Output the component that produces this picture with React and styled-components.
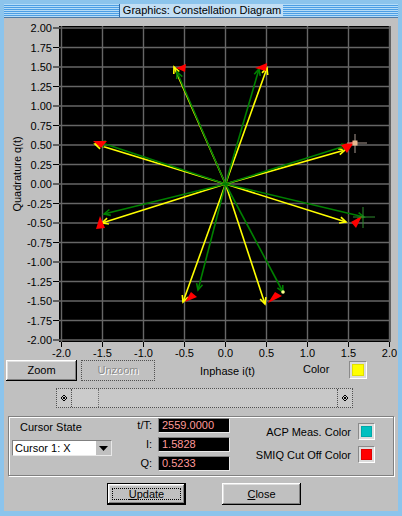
import React from 'react';
import styled, { createGlobalStyle } from 'styled-components';

const GlobalStyle = createGlobalStyle`
  html, body { margin: 0; padding: 0; background: #8cc4ec; }
  body { font-family: "Liberation Sans", Arial, sans-serif; font-size: 11px; color: #000; }
  * { box-sizing: border-box; }
`;

const Window = styled.div`
  width: 402px;
  height: 516px;
  background: #8cc4ec;
  padding: 4px 4px 5px 4px;
  display: flex;
  flex-direction: column;
`;

const TitleBar = styled.div`
  height: 14px;
  display: flex;
  border-bottom: 1px solid #4d7aa6;
`;

const Stripes = styled.div`
  flex: 1;
  background: repeating-linear-gradient(to bottom, #b4dcf8 0 1px, #4c9ee4 1px 2px);
`;

const TitleText = styled.div`
  padding: 0 2px 0 3px;
  background: #c2def4;
  border-left: 1px solid #2e6aa8;
  display: flex;
  align-items: center;
  font-size: 11px;
  line-height: 13px;
  white-space: nowrap;
`;

const Body = styled.div`
  flex: 1;
  background: #c0c0c0;
  display: flex;
  flex-direction: column;
`;

const ChartSvg = styled.svg`
  display: block;
  width: 394px;
  height: 341px;
`;

const ToolRow = styled.div`
  display: flex;
  align-items: center;
  height: 22px;
  padding-left: 2px;
`;

const Button = styled.button`
  width: ${p => p.$w}px;
  height: ${p => p.$h || 21}px;
  margin-left: ${p => p.$ml || 0}px;
  padding: 0;
  background: #c0c0c0;
  color: #000;
  font: 11px "Liberation Sans", Arial, sans-serif;
  border: none;
  box-shadow: inset -1px -1px #000, inset 1px 1px #fff, inset -2px -2px #808080, inset 2px 2px #dfdfdf;
`;

const DisabledButton = styled.div`
  width: ${p => p.$w}px;
  height: 21px;
  margin-left: ${p => p.$ml || 0}px;
  border: 1px dotted #505050;
  display: flex;
  align-items: center;
  justify-content: center;
  color: #8a8a8a;
  text-shadow: 1px 1px 0 #fff;
`;

const FocusButton = styled.button`
  width: ${p => p.$w}px;
  height: 22px;
  padding: 0;
  background: #c0c0c0;
  color: #000;
  font: 11px "Liberation Sans", Arial, sans-serif;
  border: 1px solid #000;
  box-shadow: inset -1px -1px #000, inset 1px 1px #fff, inset -2px -2px #808080, inset 2px 2px #dfdfdf;
  display: flex;
  align-items: center;
  justify-content: center;
`;

const FocusRing = styled.span`
  border: 1px dotted #000;
  width: calc(100% - 8px);
  height: calc(100% - 8px);
  display: flex;
  align-items: center;
  justify-content: center;
`;

const Label = styled.span`
  margin-left: ${p => p.$ml || 0}px;
  margin-top: ${p => p.$mt || 0}px;
  white-space: nowrap;
`;

const Swatch = styled.div`
  width: ${p => p.$s || 17}px;
  height: ${p => p.$s || 17}px;
  margin-left: ${p => p.$ml || 0}px;
  border: 1px solid;
  border-color: #8a8a8a #fff #fff #8a8a8a;
  background: #dcdcdc;
  padding: 2px;
`;

const SwatchFill = styled.div`
  width: 100%;
  height: 100%;
  background: ${p => p.$c};
  border: 1px solid ${p => p.$b};
`;

const ScrollBar = styled.div`
  margin: 7px 0 0 52px;
  width: 297px;
  height: 20px;
  border: 1px dotted #505050;
  display: flex;
  background: #c8c8c8;
`;

const ScrollArrow = styled.div`
  width: 15px;
  display: flex;
  align-items: center;
  justify-content: center;
  ${p => (p.$side === 'left' ? 'border-right: 1px dotted #505050;' : 'border-left: 1px dotted #505050;')}
`;

const Thumb = styled.div`
  width: 27px;
  border-right: 1px dotted #707070;
  background: #cbcbcb;
`;

const Track = styled.div`
  flex: 1;
`;

const Group = styled.div`
  margin: 8px 4px 0 4px;
  height: 60px;
  border: 1px solid #808080;
  box-shadow: 1px 1px 0 #fff, inset 1px 1px 0 #fff;
  display: flex;
`;

const CursorCol = styled.div`
  width: 104px;
  padding: 4px 0 0 3px;
  display: flex;
  flex-direction: column;
`;

const Select = styled.div`
  margin-top: 7px;
  width: 100px;
  height: 16px;
  border: 1px solid;
  border-color: #808080 #e8e8e8 #e8e8e8 #808080;
  background: #fff;
  display: flex;
`;

const SelectText = styled.span`
  flex: 1;
  padding-left: 2px;
  line-height: 14px;
`;

const SelectBtn = styled.span`
  width: 15px;
  background: #c0c0c0;
  display: flex;
  align-items: center;
  justify-content: center;
`;

const ValuesGrid = styled.div`
  margin-left: 9px;
  padding-top: 1px;
  display: grid;
  grid-template-columns: 30px 72px;
  grid-auto-rows: 15px;
  column-gap: 6px;
  row-gap: 4px;
`;

const ValueLabel = styled.span`
  text-align: right;
  line-height: 15px;
`;

const ValueField = styled.div`
  background: #000;
  color: #ff9a9a;
  border: 1px solid;
  border-color: #808080 #e8e8e8 #e8e8e8 #808080;
  padding-left: 3px;
  line-height: 13px;
`;

const RightCol = styled.div`
  margin-left: auto;
  padding: 6px 18px 0 0;
  display: flex;
  flex-direction: column;
  gap: 6px;
`;

const ColorRow = styled.div`
  display: flex;
  align-items: center;
  justify-content: flex-end;
  gap: 7px;
`;

const ButtonRow = styled.div`
  margin-top: 7px;
  padding-left: 103px;
  display: flex;
  gap: 36px;
`;

const X = i => 225.5 + 82 * i;
const Y = q => 184 - 78 * q;
const C = [225.5, 184];

const xTicks = [-2, -1.5, -1, -0.5, 0, 0.5, 1, 1.5, 2];
const yTicks = [2, 1.75, 1.5, 1.25, 1, 0.75, 0.5, 0.25, 0, -0.25, -0.5, -0.75, -1, -1.25, -1.5, -1.75, -2];

const vectors = [
  { y: [174, 67], g: [177, 72], r: [[176, 68], [186, 64], [185, 72]] },
  { y: [267, 68], g: [259, 69], r: [[255, 68], [267, 63], [266, 71]] },
  { y: [95, 144], g: [99, 142], r: [[93, 141], [107, 141], [101, 148]] },
  { y: [102, 223], g: [104, 214], r: [[100, 216], [96, 229], [105, 228]] },
  { y: [345, 150], g: [348, 145], r: [[341, 145], [355, 141], [347, 153]] },
  { y: [346, 222], g: [364, 217], r: [[351, 222], [362, 216], [356, 228]] },
  { y: [183, 302], g: [198, 290], r: [[185, 302], [191, 292], [197, 297]] },
  { y: [265, 304], g: [283, 292], r: [[268, 303], [275, 292], [282, 296]] },
];

function head([ex, ey], len = 7, ang = 0.45) {
  const a = Math.atan2(ey - C[1], ex - C[0]);
  const p1 = [ex - len * Math.cos(a - ang), ey - len * Math.sin(a - ang)];
  const p2 = [ex - len * Math.cos(a + ang), ey - len * Math.sin(a + ang)];
  return `M${p1[0].toFixed(1)},${p1[1].toFixed(1)} L${ex},${ey} L${p2[0].toFixed(1)},${p2[1].toFixed(1)}`;
}

const fmtX = v => (v < 0 ? '-' : '') + Math.abs(v).toFixed(1);
const fmtY = v => (v < 0 ? '-' : '') + Math.abs(v).toFixed(2);
const FONT = '"Liberation Sans", Arial, sans-serif';

function Chart() {
  return (
    <ChartSvg viewBox="4 18 394 341">
      <rect x="59" y="26" width="331.5" height="316" fill="#000" />
      {xTicks.map(v => (
        <g key={'x' + v}>
          <line x1={X(v)} y1="26" x2={X(v)} y2="342" stroke="#666" strokeWidth="1.4" />
          <line x1={X(v)} y1="342" x2={X(v)} y2="347" stroke="#000" strokeWidth="1" />
          <text x={X(v)} y="357" textAnchor="middle" fontSize="11" fontFamily={FONT}>{fmtX(v)}</text>
        </g>
      ))}
      {yTicks.map(v => (
        <g key={'y' + v}>
          <line x1="59" y1={Y(v)} x2="390.5" y2={Y(v)} stroke="#666" strokeWidth="1.4" />
          <line x1="53" y1={Y(v)} x2="59" y2={Y(v)} stroke="#000" strokeWidth="1" />
          <text x="52" y={Y(v) + 4} textAnchor="end" fontSize="11" fontFamily={FONT}>{fmtY(v)}</text>
        </g>
      ))}
      <text x="21" y="174" transform="rotate(-90 21 174)" textAnchor="middle" fontSize="11" fontFamily={FONT}>Quadrature q(t)</text>
      {vectors.map((v, k) => (
        <g key={'yl' + k} stroke="#ffff00" strokeWidth="1.6" fill="none">
          <line x1={C[0]} y1={C[1]} x2={v.y[0]} y2={v.y[1]} />
          <path d={head(v.y)} />
        </g>
      ))}
      {vectors.map((v, k) => (
        <g key={'g' + k} stroke="#008000" strokeWidth="1.6" fill="none">
          <line x1={C[0]} y1={C[1]} x2={v.g[0]} y2={v.g[1]} />
          <path d={head(v.g)} />
        </g>
      ))}
      {vectors.map((v, k) => (
        <polygon key={'r' + k} points={v.r.map(p => p.join(',')).join(' ')} fill="#ff0000" />
      ))}
      <g stroke="#a89890" strokeWidth="1">
        <line x1="347" y1="143" x2="367" y2="143" />
        <line x1="355" y1="134" x2="355" y2="153" />
      </g>
      <rect x="352.5" y="140.5" width="5" height="5" fill="#e8b890" />
      <g stroke="#2e8b2e" strokeWidth="1">
        <line x1="353" y1="217" x2="375" y2="217" />
        <line x1="363" y1="207" x2="363" y2="228" />
      </g>
      <circle cx="283" cy="292" r="1.8" fill="#ffff90" />
    </ChartSvg>
  );
}

function ArrowGlyph({ dir }) {
  const d = dir === 'left' ? 'M1 4 L4 1 L7 4 L4 7 Z' : 'M1 4 L4 1 L7 4 L4 7 Z';
  return (
    <svg width="8" height="8" viewBox="0 0 8 8">
      <path d={d} fill="none" stroke="#000" strokeWidth="1" />
      <rect x="3" y="3" width="2" height="2" fill="#000" />
    </svg>
  );
}

export default function App() {
  return (
    <>
      <GlobalStyle />
      <Window>
        <TitleBar>
          <Stripes />
          <TitleText>Graphics: Constellation Diagram</TitleText>
          <Stripes />
        </TitleBar>
        <Body>
          <Chart />
          <ToolRow>
            <Button $w={71}>Zoom</Button>
            <DisabledButton $w={74} $ml={4}>Unzoom</DisabledButton>
            <Label $ml={45} $mt={1}>Inphase i(t)</Label>
            <Label $ml={48} $mt={-3}>Color</Label>
            <Swatch $ml={20} $s={18}>
              <SwatchFill $c="#ffff00" $b="#e0e000" />
            </Swatch>
          </ToolRow>
          <ScrollBar>
            <ScrollArrow $side="left"><ArrowGlyph dir="left" /></ScrollArrow>
            <Thumb />
            <Track />
            <ScrollArrow $side="right"><ArrowGlyph dir="right" /></ScrollArrow>
          </ScrollBar>
          <Group>
            <CursorCol>
              <Label $ml={8}>Cursor State</Label>
              <Select>
                <SelectText>Cursor 1: X</SelectText>
                <SelectBtn>
                  <svg width="9" height="5" viewBox="0 0 9 5"><path d="M0 0 H9 L4.5 5 Z" fill="#000" /></svg>
                </SelectBtn>
              </Select>
            </CursorCol>
            <ValuesGrid>
              <ValueLabel>t/T:</ValueLabel>
              <ValueField>2559.0000</ValueField>
              <ValueLabel>I:</ValueLabel>
              <ValueField>1.5828</ValueField>
              <ValueLabel>Q:</ValueLabel>
              <ValueField>0.5233</ValueField>
            </ValuesGrid>
            <RightCol>
              <ColorRow>
                <span>ACP Meas. Color</span>
                <Swatch><SwatchFill $c="#00c0c0" $b="#00a8a8" /></Swatch>
              </ColorRow>
              <ColorRow>
                <span>SMIQ Cut Off Color</span>
                <Swatch><SwatchFill $c="#ff0000" $b="#e00000" /></Swatch>
              </ColorRow>
            </RightCol>
          </Group>
          <ButtonRow>
            <FocusButton $w={79}><FocusRing><u>U</u>pdate</FocusRing></FocusButton>
            <Button $w={79} $h={22}><u>C</u>lose</Button>
          </ButtonRow>
        </Body>
      </Window>
    </>
  );
}
